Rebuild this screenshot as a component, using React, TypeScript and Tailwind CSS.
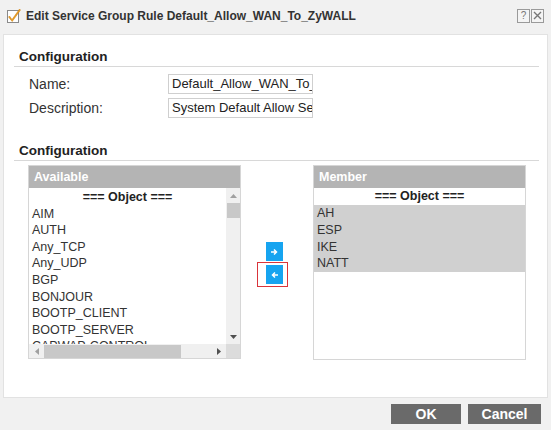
import React from "react";

const font = { fontFamily: "'Liberation Sans', Arial, sans-serif" };

function EditIcon() {
  return (
    <svg width="14" height="15" viewBox="0 0 14 15">
      <rect x="0.5" y="2.5" width="11" height="12" fill="#fff" stroke="#8a8a8a" />
      <path d="M2.5 8 L5 11.5 L12.5 1 L13.5 2 L5.2 13.5 L1.5 9 Z" fill="#f0a020" stroke="#c47a10" strokeWidth="0.5" />
    </svg>
  );
}

function VScroll() {
  return (
    <div className="w-[14px] bg-[#f0f0f0] flex flex-col items-center">
      <div className="h-[15px] flex items-center justify-center">
        <svg width="7" height="4" viewBox="0 0 7 4"><path d="M0 4 L3.5 0 L7 4 Z" fill="#a0a0a0" /></svg>
      </div>
      <div className="w-[13px] h-[15px] bg-[#c8c8c8]" />
      <div className="flex-1" />
      <div className="h-[15px] flex items-center justify-center">
        <svg width="7" height="4" viewBox="0 0 7 4"><path d="M0 0 L3.5 4 L7 0 Z" fill="#505050" /></svg>
      </div>
    </div>
  );
}

function HScroll() {
  return (
    <div className="h-[14px] flex">
      <div className="flex-1 bg-[#f0f0f0] flex items-center">
        <div className="w-[15px] flex items-center justify-center">
          <svg width="4" height="7" viewBox="0 0 4 7"><path d="M4 0 L0 3.5 L4 7 Z" fill="#a0a0a0" /></svg>
        </div>
        <div className="w-[137px] h-[13px] bg-[#c8c8c8]" />
        <div className="flex-1" />
        <div className="w-[15px] flex items-center justify-center">
          <svg width="4" height="7" viewBox="0 0 4 7"><path d="M0 0 L4 3.5 L0 7 Z" fill="#505050" /></svg>
        </div>
      </div>
      <div className="w-[14px] bg-[#dcdcdc]" />
    </div>
  );
}

const available = [
  "AIM",
  "AUTH",
  "Any_TCP",
  "Any_UDP",
  "BGP",
  "BONJOUR",
  "BOOTP_CLIENT",
  "BOOTP_SERVER",
  "CAPWAP-CONTROL",
];

const members = ["AH", "ESP", "IKE", "NATT"];

export default function App() {
  return (
    <div className="w-[551px] h-[430px] bg-[#f1f1f1] flex flex-col text-[#333]" style={font}>
      {/* Title bar */}
      <div className="h-[34px] flex items-center pl-[7px] pr-[7px] pb-[3px]">
        <EditIcon />
        <div className="ml-[5px] text-[12px] font-bold text-[#333]">
          Edit Service Group Rule Default_Allow_WAN_To_ZyWALL
        </div>
        <div className="flex-1" />
        <div className="flex gap-[1px]">
          <div className="w-[13px] h-[14px] border border-[#9a9a9a] bg-[#f4f4f4] flex items-center justify-center text-[10px] leading-none text-[#777]">
            ?
          </div>
          <div className="w-[13px] h-[14px] border border-[#9a9a9a] bg-[#f4f4f4] flex items-center justify-center">
            <svg width="9" height="9" viewBox="0 0 9 9"><path d="M1 1 L8 8 M8 1 L1 8" stroke="#777" strokeWidth="1.4" /></svg>
          </div>
        </div>
      </div>

      {/* Body */}
      <div className="mx-[3px] h-[364px] bg-white border border-[#e2e2e2] flex flex-col pt-[14px]">
        <div className="ml-[10px] mr-[8px] border-b border-[#d8d8d8] pl-[5px] pb-[1px] text-[13.5px] font-bold leading-[16px] text-[#222]">
          Configuration
        </div>
        <div className="flex flex-col gap-[4px] mt-[7px]">
          <div className="flex items-center h-[20px]">
            <div className="w-[164px] pl-[25px] text-[14px] text-[#333]">Name:</div>
            <div className="w-[145px] h-[20px] border border-[#cfcfcf] overflow-hidden whitespace-nowrap pl-[3px] text-[13px] leading-[18px] text-[#222]">
              Default_Allow_WAN_To_ZyWALL
            </div>
          </div>
          <div className="flex items-center h-[20px]">
            <div className="w-[164px] pl-[25px] text-[14px] text-[#333]">Description:</div>
            <div className="w-[145px] h-[20px] border border-[#cfcfcf] overflow-hidden whitespace-nowrap pl-[3px] text-[13px] leading-[18px] text-[#222]">
              System Default Allow Service Group
            </div>
          </div>
        </div>

        <div className="ml-[10px] mr-[8px] mt-[25px] border-b border-[#d8d8d8] pl-[5px] pb-[1px] text-[13.5px] font-bold leading-[16px] text-[#222]">
          Configuration
        </div>

        <div className="flex mt-[4px] ml-[24px]">
          {/* Available */}
          <div className="w-[213px] h-[194px] border border-[#d6d6d6] flex flex-col">
            <div className="h-[22px] bg-[#b4b4b4] text-white font-bold text-[12.5px] leading-[22px] pl-[5px]">
              Available
            </div>
            <div className="flex-1 flex min-h-0">
              <div className="flex-1 overflow-hidden pt-[1px]">
                <div className="h-[16.6px] leading-[16.6px] text-center font-bold text-[12.5px] text-[#222]">
                  === Object ===
                </div>
                {available.map((a) => (
                  <div key={a} className="h-[16.6px] leading-[16.6px] pl-[3px] text-[12.5px] text-[#333] whitespace-nowrap">
                    {a}
                  </div>
                ))}
              </div>
              <VScroll />
            </div>
            <HScroll />
          </div>

          {/* Arrow buttons */}
          <div className="w-[72px] flex flex-col items-start pt-[77px]">
            <div className="ml-[25px] w-[17px] h-[19px] bg-[#16a4f0] flex items-center justify-center">
              <svg width="7" height="6" viewBox="0 0 7 6"><path d="M0 3 H5 M3 0.5 L5.5 3 L3 5.5" stroke="#fff" strokeWidth="1.5" fill="none" /></svg>
            </div>
            <div className="ml-[16px] mt-[1px] w-[31px] h-[25px] border border-[#d9343a] flex items-center pl-[8px]">
              <div className="w-[17px] h-[19px] bg-[#16a4f0] flex items-center justify-center">
                <svg width="7" height="6" viewBox="0 0 7 6"><path d="M7 3 H2 M4 0.5 L1.5 3 L4 5.5" stroke="#fff" strokeWidth="1.5" fill="none" /></svg>
              </div>
            </div>
          </div>

          {/* Member */}
          <div className="w-[213px] h-[195px] border border-[#d6d6d6] flex flex-col">
            <div className="h-[22px] bg-[#b4b4b4] text-white font-bold text-[12.5px] leading-[22px] pl-[5px]">
              Member
            </div>
            <div className="h-[17px] leading-[17px] text-center font-bold text-[12.5px] text-[#222]">
              === Object ===
            </div>
            <div className="bg-[#d0d0d0]">
              {members.map((m) => (
                <div key={m} className="h-[16.75px] leading-[16.75px] pl-[3px] text-[12.5px] text-[#333]">
                  {m}
                </div>
              ))}
            </div>
          </div>
        </div>
      </div>

      {/* Footer */}
      <div className="flex-1 flex items-center justify-end pr-[10px] gap-[7px]">
        <div className="w-[70px] h-[20px] bg-[#6a6a6a] text-white font-bold text-[14px] flex items-center justify-center">
          OK
        </div>
        <div className="w-[73px] h-[20px] bg-[#6a6a6a] text-white font-bold text-[14px] flex items-center justify-center">
          Cancel
        </div>
      </div>
    </div>
  );
}
